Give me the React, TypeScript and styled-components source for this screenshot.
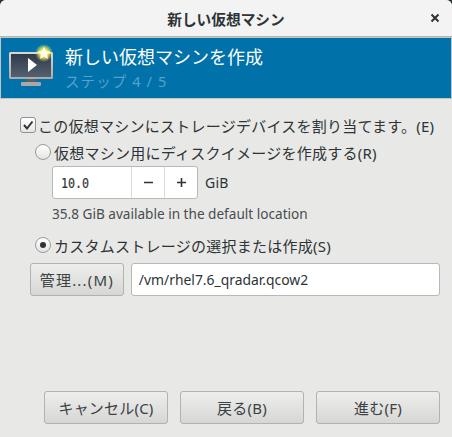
import React from 'react';
import styled, { createGlobalStyle } from 'styled-components';

const Global = createGlobalStyle`
	html, body {
		margin: 0;
		padding: 0;
		background: #2e3436;
	}
`;

const Window = styled.div`
	width: 452px;
	height: 437px;
	display: flex;
	flex-direction: column;
	overflow: hidden;
	background: #e8e8e7;
	border-radius: 6px 6px 0 0;
	color: #2e3436;
	font-family: "Noto Sans", "Noto Sans CJK JP", sans-serif;
	font-size: 15px;
	letter-spacing: 0.25px;
`;

const TitleBar = styled.div`
	height: 36px;
	flex: none;
	display: flex;
	align-items: center;
	justify-content: center;
	position: relative;
	background: #f3f3f3;
	border-bottom: 1px solid #b6b6b3;
	font-weight: 700;
	font-size: 14.7px;
	letter-spacing: 0;
`;

const CloseIcon = styled.svg`
	position: absolute;
	right: 12px;
	top: 13px;
`;

const Banner = styled.div`
	height: 60px;
	flex: none;
	display: flex;
	align-items: center;
	gap: 9px;
	padding: 0 0 0 8px;
	background: #0072a9;
	border: 1px solid #c4c4c2;
	border-width: 1px 0;
	box-shadow: inset 1px 0 0 #c4c4c2, inset -1px 0 0 #c4c4c2;
`;

const BannerText = styled.div`
	display: flex;
	flex-direction: column;
	gap: 1px;
	margin-top: -1px;
`;

const BannerTitle = styled.div`
	color: #fff;
	font-size: 18px;
	line-height: 26px;
	letter-spacing: 0;
`;

const BannerStep = styled.div`
	color: #55a1cc;
	font-size: 14.5px;
	line-height: 20px;
	letter-spacing: 1.1px;
`;

const Body = styled.div`
	flex: 1;
	display: flex;
	flex-direction: column;
	padding: 15px 12px 13px 20px;
`;

const CheckRow = styled.label`
	display: flex;
	align-items: center;
	gap: 2px;
	height: 22px;
`;

const CheckBox = styled.span`
	width: 14px;
	height: 14px;
	flex: none;
	display: flex;
	align-items: center;
	justify-content: center;
	border: 1px solid #8f9290;
	border-radius: 3px;
	background: linear-gradient(#ffffff, #e6e6e5);
`;

const Indented = styled.div`
	display: flex;
	flex-direction: column;
	padding-left: 15px;
`;

const RadioRow = styled.label<{ $top: number }>`
	display: flex;
	align-items: center;
	gap: 3px;
	height: 22px;
	margin-top: ${(p) => p.$top}px;
`;

const Radio = styled.span<{ $on?: boolean }>`
	width: 14px;
	height: 14px;
	flex: none;
	display: flex;
	align-items: center;
	justify-content: center;
	border: 1px solid #9a9c9a;
	border-radius: 50%;
	background: linear-gradient(#ffffff, #e4e4e3);

	&::after {
		content: '';
		display: ${(p) => (p.$on ? 'block' : 'none')};
		width: 6px;
		height: 6px;
		border-radius: 50%;
		background: #2e3436;
	}
`;

const SpinRow = styled.div`
	display: flex;
	align-items: center;
	gap: 7px;
	margin: 3px 0 0 17px;
	font-size: 14px;
`;

const Spin = styled.div`
	display: flex;
	width: 146px;
	height: 33px;
	box-sizing: border-box;
	background: #fff;
	border: 1px solid #b8b8b6;
	border-radius: 3px;
`;

const SpinValue = styled.div`
	flex: 1;
	padding-left: 8px;
	display: flex;
	align-items: center;
	font-family: "DejaVu Sans Mono", monospace;
	font-size: 11.7px;
	letter-spacing: 0;
	-webkit-text-stroke: 0.15px #2e3436;
	transform: scaleY(1.2);
`;

const SpinButton = styled.div`
	width: 32px;
	display: flex;
	align-items: center;
	justify-content: center;
	border-left: 1px solid #dcdcda;
`;

const Hint = styled.div`
	margin: 6px 0 0 17px;
	font-size: 13.6px;
	line-height: 18px;
	letter-spacing: 0;
	color: #484d4f;
`;

const StorageRow = styled.div`
	display: flex;
	gap: 7px;
	margin-top: 7px;
	margin-left: 10px;
`;

const Button = styled.button<{ $wide?: boolean }>`
	height: 33px;
	width: ${(p) => (p.$wide ? '124px' : '94px')};
	padding: 0;
	border: 1px solid #b2b2af;
	border-radius: 3px;
	background: linear-gradient(#eeeeec, #d6d6d4);
	color: #3c4244;
	font-family: inherit;
	font-size: 15px;
	letter-spacing: ${(p) => (p.$wide ? '0.2px' : '1.2px')};
`;

const Entry = styled.div`
	width: 310px;
	height: 33px;
	box-sizing: border-box;
	display: flex;
	align-items: center;
	padding-left: 7px;
	background: #fff;
	border: 1px solid #b8b8b6;
	border-radius: 3px;
	font-size: 13.9px;
	letter-spacing: 0;
`;

const Footer = styled.div`
	margin-top: auto;
	display: flex;
	justify-content: flex-end;
	gap: 12px;
`;

function VmIcon() {
	return (
		<svg width="48" height="48" viewBox="0 0 48 48">
			<defs>
				<radialGradient id="glow">
					<stop offset="0.45" stopColor="#f8f050" stopOpacity="0.95" />
					<stop offset="1" stopColor="#f8f050" stopOpacity="0" />
				</radialGradient>
				<linearGradient id="screen" x1="0" y1="0" x2="0" y2="1">
					<stop offset="0" stopColor="#2f3a4b" />
					<stop offset="1" stopColor="#55606f" />
				</linearGradient>
				<linearGradient id="bezel" x1="0" y1="0" x2="0" y2="1">
					<stop offset="0" stopColor="#d8d8d8" />
					<stop offset="1" stopColor="#a9a9a9" />
				</linearGradient>
			</defs>
			<rect x="1" y="8" width="44" height="27" rx="1.5" fill="url(#bezel)" />
			<rect x="3" y="10" width="40" height="23" fill="url(#screen)" />
			<path d="M20 14 L29 21 L20 28 Z" fill="#fff" />
			<rect x="18" y="35" width="10" height="3" fill="#5a5f62" />
			<rect x="13" y="38" width="20" height="4" rx="1" fill="#a8a8a8" />
			<circle cx="36" cy="9" r="9" fill="url(#glow)" />
			<path
				d="M36 2.5 L38 7 L42.5 7.5 L39 10.5 L40 15 L36 12.5 L32 15 L33 10.5 L29.5 7.5 L34 7 Z"
				fill="#fffde8"
			/>
		</svg>
	);
}

function App() {
	return (
		<Window>
			<Global />
			<TitleBar>
				新しい仮想マシン
				<CloseIcon width="10" height="10" viewBox="0 0 10 10">
					<path d="M1.5 1.5 L8.5 8.5 M8.5 1.5 L1.5 8.5" stroke="#2e3436" strokeWidth="2" />
				</CloseIcon>
			</TitleBar>
			<Banner>
				<VmIcon />
				<BannerText>
					<BannerTitle>新しい仮想マシンを作成</BannerTitle>
					<BannerStep>ステップ 4 / 5</BannerStep>
				</BannerText>
			</Banner>
			<Body>
				<CheckRow>
					<CheckBox>
						<svg width="12" height="12" viewBox="0 0 12 12">
							<path d="M2 6 L5 9.5 L10.5 2.5" fill="none" stroke="#2e3436" strokeWidth="2" />
						</svg>
					</CheckBox>
					この仮想マシンにストレージデバイスを割り当てます。(E)
				</CheckRow>
				<Indented>
					<RadioRow $top={5}>
						<Radio />
						仮想マシン用にディスクイメージを作成する(R)
					</RadioRow>
					<SpinRow>
						<Spin>
							<SpinValue>10.0</SpinValue>
							<SpinButton>
								<svg width="11" height="11" viewBox="0 0 11 11">
									<path d="M1 5.5 H10" stroke="#2e3436" strokeWidth="1.6" />
								</svg>
							</SpinButton>
							<SpinButton>
								<svg width="11" height="11" viewBox="0 0 11 11">
									<path d="M1 5.5 H10 M5.5 1 V10" stroke="#2e3436" strokeWidth="1.6" />
								</svg>
							</SpinButton>
						</Spin>
						GiB
					</SpinRow>
					<Hint>35.8 GiB available in the default location</Hint>
					<RadioRow $top={11}>
						<Radio $on />
						カスタムストレージの選択または作成(S)
					</RadioRow>
				</Indented>
				<StorageRow>
					<Button>管理...(M)</Button>
					<Entry>/vm/rhel7.6_qradar.qcow2</Entry>
				</StorageRow>
				<Footer>
					<Button $wide>キャンセル(C)</Button>
					<Button $wide>戻る(B)</Button>
					<Button $wide>進む(F)</Button>
				</Footer>
			</Body>
		</Window>
	);
}

export default App;
